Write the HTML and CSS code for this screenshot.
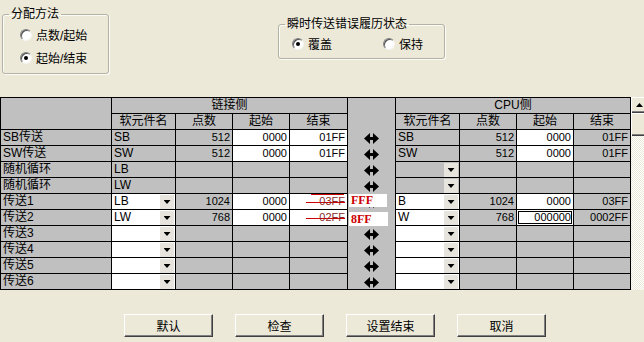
FILE: index.html
```html
<!DOCTYPE html>
<html lang="zh-CN">

<head>
  <meta charset="UTF-8">
  <meta name="viewport" content="width=device-width, initial-scale=1.0">
  <title>链接刷新设置</title>
  <link rel="stylesheet" href="styles.css">
</head>

<body>
  <svg class="defs" width="0" height="0">
    <symbol id="arrow" viewBox="0 0 15 11">
      <path d="M0 5.5 6 0v4h3V0l6 5.5L9 11V7H6v4z" />
    </symbol>
  </svg>

  <div class="top">
    <fieldset class="method">
      <legend>分配方法</legend>
      <div class="body">
        <div class="opt"><span class="radio"></span>点数/起始</div>
        <div class="opt"><span class="radio on"></span>起始/结束</div>
      </div>
    </fieldset>
    <fieldset class="state">
      <legend>瞬时传送错误履历状态</legend>
      <div class="body opts">
        <div class="opt first"><span class="radio on"></span>覆盖</div>
        <div class="opt"><span class="radio"></span>保持</div>
      </div>
    </fieldset>
  </div>

  <div class="table-wrap">
    <div class="grid">
      <div class="corner"></div>
      <div class="c span4">链接侧</div>
      <div class="arrows">
        <svg><use href="#arrow" /></svg>
        <svg><use href="#arrow" /></svg>
        <svg><use href="#arrow" /></svg>
        <svg><use href="#arrow" /></svg>
        <svg><use href="#arrow" /></svg>
        <svg><use href="#arrow" /></svg>
        <svg><use href="#arrow" /></svg>
        <svg><use href="#arrow" /></svg>
        <svg><use href="#arrow" /></svg>
        <svg><use href="#arrow" /></svg>
      </div>
      <div class="c span4">CPU侧</div>

      <div class="c">软元件名</div>
      <div class="c">点数</div>
      <div class="c">起始</div>
      <div class="c">结束</div>
      <div class="c">软元件名</div>
      <div class="c">点数</div>
      <div class="c">起始</div>
      <div class="c">结束</div>

      <!-- SB -->
      <div class="lbl">SB传送</div>
      <div class="l">SB</div>
      <div class="r">512</div>
      <div class="r w">0000</div>
      <div class="r w">01FF</div>
      <div class="l">SB</div>
      <div class="r">512</div>
      <div class="r w">0000</div>
      <div class="r">01FF</div>

      <!-- SW -->
      <div class="lbl">SW传送</div>
      <div class="l">SW</div>
      <div class="r">512</div>
      <div class="r w">0000</div>
      <div class="r w">01FF</div>
      <div class="l">SW</div>
      <div class="r">512</div>
      <div class="r w">0000</div>
      <div class="r">01FF</div>

      <!-- random cyclic -->
      <div class="lbl">随机循环</div>
      <div class="l">LB</div>
      <div></div>
      <div></div>
      <div></div>
      <div class="combo"><span></span><i></i></div>
      <div></div>
      <div></div>
      <div></div>

      <div class="lbl">随机循环</div>
      <div class="l">LW</div>
      <div></div>
      <div></div>
      <div></div>
      <div class="combo"><span></span><i></i></div>
      <div></div>
      <div></div>
      <div></div>

      <!-- transfers -->
      <div class="lbl">传送1</div>
      <div class="combo w"><span>LB</span><i></i></div>
      <div class="r">1024</div>
      <div class="r w">0000</div>
      <div class="r w"><span class="strike top-line">03FF</span></div>
      <div class="combo w"><span>B</span><i></i></div>
      <div class="r">1024</div>
      <div class="r w">0000</div>
      <div class="r">03FF</div>

      <div class="lbl">传送2</div>
      <div class="combo w"><span>LW</span><i></i></div>
      <div class="r">768</div>
      <div class="r w">0000</div>
      <div class="r w"><span class="strike">02FF</span></div>
      <div class="combo w"><span>W</span><i></i></div>
      <div class="r">768</div>
      <div class="r w focus">000000</div>
      <div class="r">0002FF</div>

      <div class="lbl">传送3</div>
      <div class="combo w"><span></span><i></i></div>
      <div></div>
      <div></div>
      <div></div>
      <div class="combo w"><span></span><i></i></div>
      <div></div>
      <div></div>
      <div></div>

      <div class="lbl">传送4</div>
      <div class="combo w"><span></span><i></i></div>
      <div></div>
      <div></div>
      <div></div>
      <div class="combo w"><span></span><i></i></div>
      <div></div>
      <div></div>
      <div></div>

      <div class="lbl">传送5</div>
      <div class="combo w"><span></span><i></i></div>
      <div></div>
      <div></div>
      <div></div>
      <div class="combo w"><span></span><i></i></div>
      <div></div>
      <div></div>
      <div></div>

      <div class="lbl">传送6</div>
      <div class="combo w"><span></span><i></i></div>
      <div></div>
      <div></div>
      <div></div>
      <div class="combo w"><span></span><i></i></div>
      <div></div>
      <div></div>
      <div></div>

      <!-- hand written corrections over the arrow column -->
      <span class="fix fix1">FFF</span>
      <span class="fix fix2">8FF</span>
    </div>

    <div class="vscroll">
      <div class="up"></div>
      <div class="thumb"></div>
    </div>
  </div>

  <div class="buttons">
    <button type="button">默认</button>
    <button type="button">检查</button>
    <button type="button">设置结束</button>
    <button type="button">取消</button>
  </div>
</body>

</html>
```

FILE: styles.css
```css
body {
  margin: 0;
  width: 644px;
  height: 342px;
  overflow: hidden;
  background: #ece9d8;
  color: #000;
  font: 12px "Liberation Sans", "Noto Sans CJK SC", sans-serif;
}

.defs {
  position: absolute;
}

/* TOP GROUP BOXES */
.top {
  display: flex;
  align-items: flex-start;
  height: 97px;
}

fieldset {
  margin: 0;
  padding: 0;
  border: 1px solid #b4b2a4;
  border-radius: 3px;
  box-sizing: border-box;
  box-shadow: 1px 1px #fbfbf8, inset 1px 1px #fbfbf8;
}

legend {
  margin-left: 6px;
  padding: 0 2px;
  line-height: 14px;
}

.method {
  margin: 7px 0 0 2px;
  width: 107px;
}

.method .body {
  padding: 2px 0 4px 17px;
}

.state {
  margin: 17px 0 0 169px;
  width: 167px;
}

.state .body {
  padding: 1px 0 3px 13px;
}

.opts {
  display: flex;
}

.opt {
  display: flex;
  align-items: center;
  gap: 4px;
  height: 23px;
}

.opt.first {
  width: 91px;
}

.radio {
  position: relative;
  width: 12px;
  height: 12px;
  box-sizing: border-box;
  border-radius: 50%;
  background: #fff;
  border: 1px solid;
  border-color: #808080 #f4f4f0 #f4f4f0 #808080;
  box-shadow: inset 1px 1px #505050;
}

.radio.on::after {
  content: "";
  position: absolute;
  left: 3px;
  top: 3px;
  width: 4px;
  height: 4px;
  border-radius: 50%;
  background: #000;
}

/* TABLE */
.table-wrap {
  display: flex;
}

.grid {
  position: relative;
  flex: none;
  display: grid;
  grid-template-columns: 110px 63px 56px 56px 57px 47px 63px 56px 56px 56px;
  grid-template-rows: repeat(12, 15px);
  gap: 1px;
  background: #000;
  border: 1px solid #000;
}

.grid > div {
  background: #c0c0c0;
  line-height: 15px;
  white-space: nowrap;
  overflow: hidden;
}

.grid > .corner {
  grid-row: span 2;
}

.grid > .span4 {
  grid-column: span 4;
}

.grid > .w {
  background: #fff;
}

.c {
  text-align: center;
}

.l {
  padding-left: 2px;
}

.lbl {
  padding-left: 2px;
}

.r {
  padding-right: 2px;
  text-align: right;
  font-size: 11px;
}

.focus {
  box-shadow: inset 0 0 0 1px #fff, inset 0 0 0 2px #000;
}

.grid > .arrows {
  grid-row: span 12;
  display: flex;
  flex-direction: column;
  align-items: center;
  gap: 5px;
  padding-top: 35px;
}

.arrows svg {
  width: 15px;
  height: 11px;
}

.combo {
  display: flex;
  justify-content: space-between;
}

.combo span {
  padding-left: 2px;
}

.combo i {
  display: flex;
  align-items: center;
  justify-content: center;
  flex: none;
  width: 14px;
  height: 14px;
  margin: 1px 1px 0 0;
  background: #e6e4dc;
}

.combo i::after {
  content: "";
  width: 7px;
  height: 4px;
  background: #000;
  clip-path: polygon(0 0, 100% 0, 50% 100%);
}

.strike {
  display: block;
  margin-left: auto;
  width: 39px;
  color: #8a2a2a;
  background: linear-gradient(#d00000, #d00000) 0 8px / 100% 1px no-repeat;
}

.strike.top-line {
  background:
    linear-gradient(#d00000, #d00000) 0 8px / 100% 1px no-repeat,
    linear-gradient(#d00000, #d00000) 5px 0 / 33px 1px no-repeat;
}

.fix {
  position: absolute;
  left: 348px;
  width: 38px;
  padding-left: 2px;
  box-sizing: border-box;
  background: #fff;
  color: #cc0000;
  font: bold 12px "Liberation Serif", serif;
}

.fix1 {
  top: 96px;
  height: 13px;
  line-height: 13px;
}

.fix2 {
  top: 114px;
  height: 14px;
  line-height: 14px;
  width: 39px;
}

/* SCROLLBAR (cut by window edge) */
.vscroll {
  flex: none;
  width: 16px;
  height: 193px;
  background: repeating-conic-gradient(#fff 0 25%, #ece9d8 0 50%) 0 0 / 2px 2px;
}

.vscroll .up,
.vscroll .thumb {
  background: #ece9d8;
  box-shadow: inset 1px 1px #fff, inset -1px -1px #404040, inset -2px -2px #808080;
}

.vscroll .up {
  position: relative;
  height: 16px;
}

.vscroll .up::after {
  content: "";
  position: absolute;
  left: 5px;
  top: 6px;
  width: 7px;
  height: 4px;
  background: #000;
  clip-path: polygon(50% 0, 100% 100%, 0 100%);
}

.vscroll .thumb {
  height: 23px;
}

/* BOTTOM BUTTONS */
.buttons {
  display: flex;
  gap: 22px;
  padding: 24px 0 0 124px;
}

button {
  width: 89px;
  height: 23px;
  padding: 0;
  background: #ece9d8;
  border: 1px solid;
  border-color: #fff #404040 #404040 #fff;
  box-shadow: inset -1px -1px #808080;
  font: 12px "Noto Sans CJK SC", sans-serif;
  color: #000;
}
```
